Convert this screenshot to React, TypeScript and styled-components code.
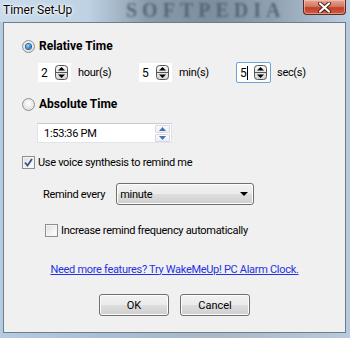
import styled, { createGlobalStyle } from "styled-components";

const GlobalStyle = createGlobalStyle`
  html, body {
    margin: 0;
    padding: 0;
    background: #9fb4c8;
  }
  * {
    box-sizing: border-box;
  }
`;

const uiFont = `Roboto, "Noto Sans", sans-serif`;

const Window = styled.div`
  width: 350px;
  height: 338px;
  display: flex;
  flex-direction: column;
  background: linear-gradient(90deg, #b4cbe2 0%, #a9bfd4 30%, #a8b8c6 60%, #b8cadb 100%);
  overflow: hidden;
  font-family: ${uiFont};
  font-size: 11px;
  letter-spacing: -0.3px;
  color: #000;
`;

const TitleBar = styled.div`
  position: relative;
  height: 22px;
  display: flex;
  align-items: flex-start;
  justify-content: space-between;
  padding-left: 3px;
  background: linear-gradient(
    90deg,
    #c9dbec 0%,
    #bfd2e4 25%,
    #8a9cab 42%,
    #7d8e9d 60%,
    #8fa1b1 78%,
    #bccfe1 100%
  );
`;

const Watermark = styled.span`
  position: absolute;
  left: 126px;
  top: 0;
  line-height: 21px;
  font-family: "Liberation Serif", serif;
  font-weight: bold;
  font-size: 20px;
  letter-spacing: 5px;
  color: #4d5f72;
  filter: blur(1.3px);
  opacity: 0.85;
`;

const Title = styled.span`
  position: relative;
  margin-top: 3px;
  font-size: 12px;
  letter-spacing: 0;
  color: #000;
  text-shadow: 0 0 6px #fff, 0 0 3px #fff, 0 0 2px #fff;
`;

const CloseButton = styled.div`
  position: relative;
  width: 43px;
  height: 15px;
  margin-right: 4px;
  display: flex;
  align-items: center;
  justify-content: center;
  border: 1px solid #5a2a22;
  border-top: none;
  border-radius: 0 0 4px 4px;
  background: linear-gradient(180deg, #e6a594 0%, #d47a64 45%, #c2412a 55%, #cf5b3f 100%);
  box-shadow: inset 0 0 0 1px rgba(255, 210, 200, 0.5);
`;

const Client = styled.div`
  flex: 1;
  margin: 0 4px 5px 3px;
  background: #f0f0f0;
  border: 1px solid #6e7b88;
  display: flex;
  flex-direction: column;
  padding-left: 18px;
`;

const Row = styled.div<{ $top: number; $indent?: number; $h?: number }>`
  display: flex;
  align-items: center;
  margin-top: ${(p) => p.$top}px;
  padding-left: ${(p) => p.$indent ?? 0}px;
  height: ${(p) => p.$h ?? 14}px;
`;

const Centered = styled(Row)`
  justify-content: center;
  margin-left: -18px;
`;

const RadioCircle = styled.span<{ $on?: boolean }>`
  width: 13px;
  height: 13px;
  border-radius: 50%;
  border: 1px solid #8e8f8f;
  background: radial-gradient(circle at 50% 40%, #ffffff 0%, #e2e2e2 70%, #cfcfcf 100%);
  display: flex;
  align-items: center;
  justify-content: center;
  margin-right: 4px;
  &::after {
    content: "";
    display: ${(p) => (p.$on ? "block" : "none")};
    width: 5px;
    height: 5px;
    border-radius: 50%;
    background: radial-gradient(circle at 40% 35%, #9fe0ff 0%, #2a8ad4 55%, #114e8c 100%);
    box-shadow: 0 0 0 1px #2c628b;
  }
`;

const BoldLabel = styled.span`
  font-weight: bold;
  font-size: 12px;
  letter-spacing: 0;
`;

const SpinBox = styled.div<{ $focused?: boolean }>`
  width: 35px;
  height: 21px;
  background: #fff;
  border: 1px solid ${(p) => (p.$focused ? "#6fa0d8" : "#f0f0f0")};
  border-radius: ${(p) => (p.$focused ? "2px" : "0")};
  display: flex;
  align-items: center;
  padding-left: 3px;
  padding-right: 3px;
  justify-content: space-between;
`;

const SpinValue = styled.span<{ $caret?: boolean }>`
  font-size: 12px;
  border-right: ${(p) => (p.$caret ? "1px solid #000" : "none")};
  padding-right: 1px;
  line-height: 14px;
`;

const UnitLabel = styled.span<{ $w: number }>`
  width: ${(p) => p.$w}px;
  padding-left: 6px;
`;

const TimeBox = styled.div`
  width: 135px;
  height: 20px;
  background: #fff;
  border: 1px solid #e2e3ea;
  border-top-color: #c8cbd4;
  display: flex;
  align-items: center;
  justify-content: space-between;
  padding: 0 1px 0 6px;
`;

const UpDown = styled.div`
  display: flex;
  flex-direction: column;
  gap: 1px;
`;

const UpDownButton = styled.div`
  width: 15px;
  height: 8px;
  border: 1px solid #d5d8dd;
  border-radius: 1px;
  background: linear-gradient(180deg, #fbfbfb, #eceef1);
  display: flex;
  align-items: center;
  justify-content: center;
`;

const CheckBox = styled.span`
  width: 13px;
  height: 13px;
  border: 1px solid #8f8f8f;
  background: linear-gradient(135deg, #dcdcdc 0%, #f4f4f4 60%, #ffffff 100%);
  box-shadow: inset 0 0 0 1px #f4f4f4;
  display: flex;
  align-items: center;
  justify-content: center;
  margin-right: 3px;
`;

const Select = styled.div`
  width: 138px;
  height: 22px;
  margin-left: 11px;
  border: 1px solid #707070;
  border-radius: 3px;
  background: linear-gradient(180deg, #f2f2f2 0%, #ebebeb 48%, #dddddd 52%, #cfcfcf 100%);
  box-shadow: inset 0 0 0 1px #fcfcfc;
  display: flex;
  align-items: center;
  justify-content: space-between;
  padding: 0 5px 0 3px;
`;

const Link = styled.a`
  color: #2431e4;
  text-decoration: underline;
  cursor: pointer;
`;

const ButtonRow = styled(Centered)`
  gap: 11px;
`;

const PushButton = styled.button`
  width: 70px;
  height: 22px;
  font-family: ${uiFont};
  font-size: 11px;
  color: #000;
  border: 1px solid #707070;
  border-radius: 3px;
  background: linear-gradient(180deg, #f2f2f2 0%, #ebebeb 48%, #dddddd 52%, #cfcfcf 100%);
  box-shadow: inset 0 0 0 1px #fcfcfc;
  padding: 0;
`;

const SpinArrows = () => (
  <svg width="13" height="15" viewBox="0 0 13 15">
    <defs>
      <linearGradient id="sg" x1="0" y1="0" x2="0" y2="1">
        <stop offset="0" stopColor="#f6f6f6" />
        <stop offset="1" stopColor="#d4d4d4" />
      </linearGradient>
    </defs>
    <rect x="0.5" y="0.5" width="12" height="14" rx="3" fill="url(#sg)" stroke="#555" />
    <line x1="1" y1="7.5" x2="12" y2="7.5" stroke="#555" />
    <path d="M3 5.5 L6.5 2 L10 5.5 Z" fill="#000" />
    <path d="M3 9.5 L10 9.5 L6.5 13 Z" fill="#000" />
  </svg>
);

const Triangle = ({ up }: { up?: boolean }) => (
  <svg width="7" height="4" viewBox="0 0 7 4">
    <path d={up ? "M0 4 L3.5 0 L7 4 Z" : "M0 0 L7 0 L3.5 4 Z"} fill="#4a6fb6" />
  </svg>
);

const Tick = () => (
  <svg width="9" height="9" viewBox="0 0 9 9">
    <path d="M1 4.5 L3.5 7.5 L8 1" fill="none" stroke="#3b4f80" strokeWidth="1.8" />
  </svg>
);

const CloseGlyph = () => (
  <svg width="13" height="11" viewBox="0 0 13 11">
    <path d="M2 1.5 L11 9.5 M11 1.5 L2 9.5" stroke="#4a2018" strokeWidth="4" strokeLinecap="round" />
    <path d="M2 1.5 L11 9.5 M11 1.5 L2 9.5" stroke="#fff" strokeWidth="2.2" strokeLinecap="round" />
  </svg>
);

const DropArrow = () => (
  <svg width="8" height="4" viewBox="0 0 8 4">
    <path d="M0 0 L8 0 L4 4 Z" fill="#000" />
  </svg>
);

export default function App() {
  return (
    <>
      <GlobalStyle />
      <Window>
        <TitleBar>
          <Watermark>SOFTPEDIA</Watermark>
          <Title>Timer Set-Up</Title>
          <CloseButton>
            <CloseGlyph />
          </CloseButton>
        </TitleBar>
        <Client>
          <Row $top={16}>
            <RadioCircle $on />
            <BoldLabel>Relative Time</BoldLabel>
          </Row>
          <Row $top={9} $h={21} $indent={15}>
            <SpinBox>
              <SpinValue>2</SpinValue>
              <SpinArrows />
            </SpinBox>
            <UnitLabel $w={66}>hour(s)</UnitLabel>
            <SpinBox>
              <SpinValue>5</SpinValue>
              <SpinArrows />
            </SpinBox>
            <UnitLabel $w={63}>min(s)</UnitLabel>
            <SpinBox $focused>
              <SpinValue $caret>5</SpinValue>
              <SpinArrows />
            </SpinBox>
            <UnitLabel $w={50}>sec(s)</UnitLabel>
          </Row>
          <Row $top={14}>
            <RadioCircle />
            <BoldLabel>Absolute Time</BoldLabel>
          </Row>
          <Row $top={12} $h={20} $indent={15}>
            <TimeBox>
              <span>1:53:36 PM</span>
              <UpDown>
                <UpDownButton>
                  <Triangle up />
                </UpDownButton>
                <UpDownButton>
                  <Triangle />
                </UpDownButton>
              </UpDown>
            </TimeBox>
          </Row>
          <Row $top={12}>
            <CheckBox>
              <Tick />
            </CheckBox>
            <span>Use voice synthesis to remind me</span>
          </Row>
          <Row $top={14} $h={22} $indent={21}>
            <span>Remind every</span>
            <Select>
              <span>minute</span>
              <DropArrow />
            </Select>
          </Row>
          <Row $top={18} $indent={23}>
            <CheckBox />
            <span>Increase remind frequency automatically</span>
          </Row>
          <Centered $top={25}>
            <Link>Need more features? Try WakeMeUp! PC Alarm Clock.</Link>
          </Centered>
          <ButtonRow $top={18} $h={22}>
            <PushButton>OK</PushButton>
            <PushButton>Cancel</PushButton>
          </ButtonRow>
        </Client>
      </Window>
    </>
  );
}
